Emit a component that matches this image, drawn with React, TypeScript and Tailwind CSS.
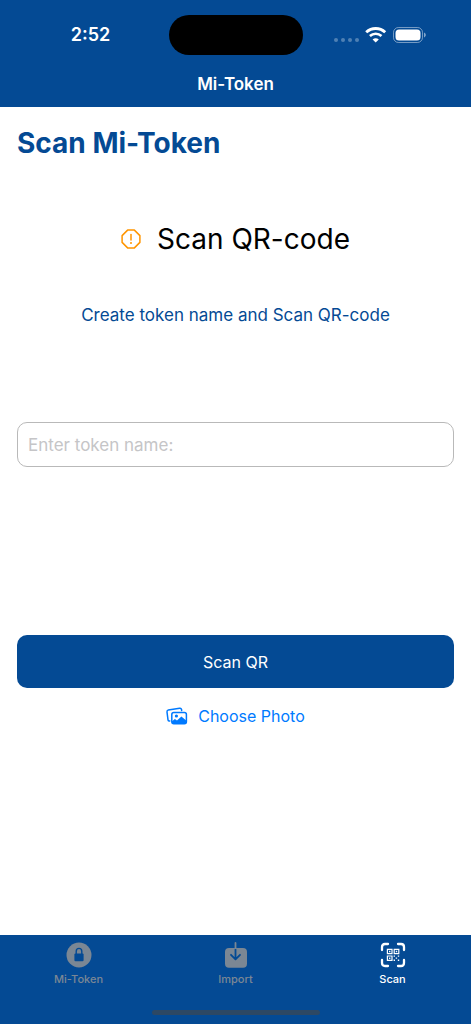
import { useState } from "react";
import clsx from "clsx";

const tabs = [
  { id: "token", label: "Mi-Token", Icon: LockIcon },
  { id: "import", label: "Import", Icon: ImportIcon },
  { id: "scan", label: "Scan", Icon: ScanIcon },
];

function WifiIcon() {
  return (
    <svg width="22" height="16" viewBox="0 0 22 16" fill="none" stroke="white">
      <path d="M1.2 5.2C6.7 0.2 14.7 0.2 20.2 5.2" strokeWidth="2.9" />
      <path d="M4.9 8.9C8.2 6 13.2 6 16.5 8.9" strokeWidth="2.7" />
      <path d="M10.7 15.6 7.6 12.4C9.4 10.9 12 10.9 13.8 12.4Z" fill="white" stroke="none" />
    </svg>
  );
}

function BatteryIcon() {
  return (
    <svg width="34" height="16" viewBox="0 0 34 16">
      <rect x="0.5" y="0.5" width="29" height="15" rx="5" fill="none" stroke="white" strokeOpacity="0.45" />
      <rect x="2.5" y="2.5" width="25" height="11" rx="3.5" fill="white" />
      <path d="M31 5.6C33.4 6.4 33.4 9.6 31 10.4Z" fill="white" fillOpacity="0.5" />
    </svg>
  );
}

function WarningIcon() {
  return (
    <svg width="20" height="20" viewBox="0 0 20 20" fill="none" stroke="#ff9500" strokeWidth="1.5" strokeLinejoin="round" strokeLinecap="round">
      <path d="M6.6 1.1H13.4L18.9 6.6V13.4L13.4 18.9H6.6L1.1 13.4V6.6Z" />
      <path d="M10 5.6V10.9" />
      <circle cx="10" cy="13.9" r="1" fill="#ff9500" stroke="none" />
    </svg>
  );
}

function PhotosIcon() {
  return (
    <svg width="22" height="18" viewBox="0 0 22 18" fill="none" stroke="#007aff" strokeWidth="1.5" strokeLinejoin="round" strokeLinecap="round">
      <path d="M3.8 14 3 13.9C2.4 13.8 2.1 13.4 2 12.8L1 5C0.9 3.9 1.3 3.3 2.3 3.1L13.6 1.2C14.7 1 15.3 1.5 15.5 2.4L15.7 3.5" />
      <rect x="5.8" y="5.6" width="14.6" height="11.2" rx="2" />
      <circle cx="10.4" cy="9" r="1.6" fill="#007aff" stroke="none" />
      <path d="M6 14.2 8.9 12.1 11 13.4 15.4 9.6 20.2 13.6V15.6L19.4 16.7H7L6 15.7Z" fill="#007aff" stroke="none" />
    </svg>
  );
}

function LockIcon() {
  return (
    <svg width="26" height="26" viewBox="0 0 26 26">
      <circle cx="13" cy="13" r="12.5" fill="currentColor" />
      <rect x="8.4" y="11.4" width="9.2" height="7.8" rx="1.2" fill="#044a94" />
      <path d="M10.2 12V9.4C10.2 5.4 15.8 5.4 15.8 9.4V12" fill="none" stroke="#044a94" strokeWidth="1.4" />
    </svg>
  );
}

function ImportIcon() {
  return (
    <svg width="26" height="26" viewBox="0 0 26 26" fill="none" strokeLinecap="round" strokeLinejoin="round">
      <rect x="2" y="6" width="22" height="19.8" rx="4" fill="currentColor" />
      <path d="M12.5 7.5V17.2M8 12.8 12.5 17.4 17 12.8" stroke="#044a94" strokeWidth="1.8" />
      <path d="M12.5 1V6" stroke="currentColor" strokeWidth="1.8" />
    </svg>
  );
}

function ScanIcon() {
  return (
    <svg width="26" height="26" viewBox="0 0 26 26" fill="none" stroke="currentColor">
      <path d="M2 8V5Q2 2 5 2H8M18 2H21Q24 2 24 5V8M24 18V21Q24 24 21 24H18M8 24H5Q2 24 2 21V18" strokeWidth="2.3" strokeLinecap="round" />
      <path d="M7.4 7.4H12V11.6H7.4ZM14.2 7.4H18.8V11.6H14.2ZM7.4 14H12V18.4H7.4Z" strokeWidth="1.2" />
      <path
        d="M9 8.8H10.4V10.2H9ZM15.8 8.8H17.2V10.2H15.8ZM9 15.5H10.4V16.9H9ZM13.6 13.4H15V14.8H13.6ZM17.8 13.4H19.2V14.8H17.8ZM15.7 15.4H17.1V16.8H15.7ZM13.6 17.5H15V18.9H13.6ZM17.8 17.5H19.2V18.9H17.8Z"
        fill="currentColor"
        stroke="none"
      />
    </svg>
  );
}

function StatusBar() {
  return (
    <div className="grid grid-cols-3 items-center pt-[15px]">
      <span className="pl-6 text-center text-lg leading-6 font-semibold">2:52</span>
      <div className="h-10 w-[134px] justify-self-center rounded-full bg-black" />
      <div className="flex items-center gap-[6px] pl-5">
        <div className="flex gap-[3px] pt-[10px]">
          {[0, 1, 2, 3].map((dot) => (
            <span key={dot} className="size-1 rounded-full bg-white/30" />
          ))}
        </div>
        <WifiIcon />
        <BatteryIcon />
      </div>
    </div>
  );
}

export default function App() {
  const [tokenName, setTokenName] = useState("");
  const [activeTab, setActiveTab] = useState("scan");

  return (
    <div className="flex min-h-screen flex-col bg-white font-['Inter',sans-serif]">
      <header className="bg-[#044a94] pb-[11px] text-white">
        <StatusBar />
        <p className="pt-[17px] text-center text-[17px] leading-6 font-semibold">Mi-Token</p>
      </header>

      <main className="flex flex-1 flex-col px-[17px] pt-4">
        <h1 className="text-[28px] leading-10 font-bold text-[#044a94]">Scan Mi-Token</h1>

        <div className="mt-14 flex items-center justify-center gap-4">
          <WarningIcon />
          <h2 className="text-[28px] leading-10 text-black">Scan QR-code</h2>
        </div>
        <p className="mt-11 text-center text-[17px] leading-6 text-[#044a94]">
          Create token name and Scan QR-code
        </p>

        <input
          type="text"
          aria-label="Token name"
          placeholder="Enter token name:"
          value={tokenName}
          onChange={(e) => setTokenName(e.target.value)}
          className="mt-[95px] h-[45px] w-full rounded-[10px] border border-[#b9b9b9] px-[10px] text-[17px] text-black outline-none placeholder:text-[#c5c5c7]"
        />

        <button
          type="button"
          className="mt-[168px] h-[53px] w-full cursor-pointer rounded-[10px] bg-[#044a94] text-base text-white"
        >
          Scan QR
        </button>
        <button
          type="button"
          className="mt-4 flex cursor-pointer items-center gap-[10px] self-center text-base leading-6 text-[#007aff]"
        >
          <PhotosIcon />
          Choose Photo
        </button>
      </main>

      <footer className="bg-[#044a94] pt-[7px] pb-[9px]">
        <nav className="grid grid-cols-3">
          {tabs.map(({ id, label, Icon }) => (
            <button
              key={id}
              type="button"
              onClick={() => setActiveTab(id)}
              className={clsx(
                "flex cursor-pointer flex-col items-center gap-[3px] text-[11px] leading-4 font-medium",
                activeTab === id ? "text-white" : "text-[#7b8794]"
              )}
            >
              <Icon />
              {label}
            </button>
          ))}
        </nav>
        <div className="mx-auto mt-[23px] h-[5px] w-[168px] rounded-full bg-[#2d4864]" />
      </footer>
    </div>
  );
}
